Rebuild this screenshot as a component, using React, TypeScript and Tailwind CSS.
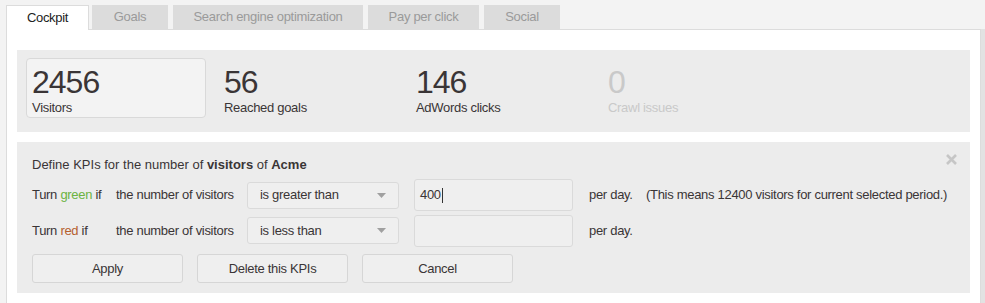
import React from "react";

const font = { fontFamily: '"Liberation Sans", Arial, sans-serif' };

function Stat({ value, label, active, muted }: { value: string; label: string; active?: boolean; muted?: boolean }) {
  return (
    <div
      className={
        "w-[180px] h-[60px] shrink-0 px-[5px] pt-[7px] rounded-[4px] border " +
        (active ? "bg-[#f3f3f3] border-[#d9d9d9]" : "border-transparent")
      }
    >
      <div className={"text-[32px] leading-[32px] tracking-[-1px] " + (muted ? "text-[#c9c9c9]" : "text-[#3a3536]")}>{value}</div>
      <div className={"mt-[2px] text-[13px] leading-[16px] " + (muted ? "text-[#c9c9c9]" : "text-[#3a3536]")}>{label}</div>
    </div>
  );
}

function Select({ text }: { text: string }) {
  return (
    <div className="w-[152px] h-[27px] shrink-0 border border-[#dadada] rounded-[3px] bg-[#efefef] flex items-center justify-between pl-[12px] pr-[12px] text-[13px] text-[#3a3536] whitespace-nowrap">
      <span>{text}</span>
      <svg width="9" height="5" viewBox="0 0 9 5">
        <path d="M0 0 L9 0 L4.5 5 Z" fill="#a0a0a0" />
      </svg>
    </div>
  );
}

function Input({ value }: { value?: string }) {
  return (
    <div className="w-[159px] h-[32px] shrink-0 border border-[#dadada] rounded-[3px] bg-[#efefef] flex items-center pl-[5px] text-[13px] text-[#3a3536]">
      {value && (
        <>
          <span>{value}</span>
          <span className="inline-block w-px h-[15px] bg-[#333] ml-[1px]" />
        </>
      )}
    </div>
  );
}

function Btn({ label }: { label: string }) {
  return (
    <div className="w-[151px] h-[29px] shrink-0 border border-[#d6d6d6] rounded-[3px] bg-[#efefef] flex items-center justify-center text-[13px] text-[#3a3536]">
      {label}
    </div>
  );
}

export default function App() {
  const tabs = ["Goals", "Search engine optimization", "Pay per click", "Social"];
  const widths = ["w-[76px]", "w-[190px]", "w-[111px]", "w-[76px]"];
  return (
    <div style={font} className="w-[985px] h-[303px] bg-[#f3f3f3] overflow-hidden pt-[5px] text-[#3a3536] tracking-[-0.3px]">
      <div className="flex items-start h-[24px] pl-[6px]">
        <div className="w-[83px] h-[25px] shrink-0 bg-white border border-b-0 border-[#dcdcdc] text-[13px] text-[#222] flex items-center justify-center relative z-10 pb-[1px]">
          Cockpit
        </div>
        <div className="flex gap-[5px] ml-[3px] h-[24px]">
          {tabs.map((t, i) => (
            <div key={t} className={widths[i] + " h-[24px] shrink-0 bg-[#dcdcdc] text-[13px] text-[#9a9a9a] flex items-center justify-center"}>
              {t}
            </div>
          ))}
        </div>
      </div>
      <div className="flex">
        <div className="ml-[6px] w-[975px] h-[280px] shrink-0 bg-white border border-b-0 border-[#dcdcdc] px-[10px] pt-[20px]">
          <div className="h-[82px] bg-[#ececec] px-[9px] pt-[8px] flex gap-[12px]">
            <Stat value="2456" label="Visitors" active />
            <Stat value="56" label="Reached goals" />
            <Stat value="146" label="AdWords clicks" />
            <Stat value="0" label="Crawl issues" muted />
          </div>
          <div className="mt-[10px] h-[151px] bg-[#ececec] px-[15px] pt-[14px] relative text-[13px] text-[#3a3536] whitespace-nowrap">
            <svg className="absolute right-[13px] top-[12px]" width="11" height="11" viewBox="0 0 11 11">
              <path d="M1 1 L10 10 M10 1 L1 10" stroke="#c6c6c6" strokeWidth="2.6" />
            </svg>
            <div className="leading-[18px] tracking-normal">
              Define KPIs for the number of <b>visitors</b> of <b>Acme</b>
            </div>
            <div className="mt-[5px] flex items-center h-[32px]">
              <div className="w-[84px] shrink-0">
                Turn <span className="text-[#6bb342]">green</span> if
              </div>
              <div className="w-[131px] shrink-0">the number of visitors</div>
              <Select text="is greater than" />
              <div className="ml-[15px] shrink-0"><Input value="400" /></div>
              <div className="ml-[16px] w-[57px] shrink-0">per day.</div>
              <div className="shrink-0">(This means 12400 visitors for current selected period.)</div>
            </div>
            <div className="mt-[4px] flex items-center h-[31px]">
              <div className="w-[84px] shrink-0">
                Turn <span className="text-[#b5602f]">red</span> if
              </div>
              <div className="w-[131px] shrink-0">the number of visitors</div>
              <Select text="is less than" />
              <div className="ml-[15px] shrink-0"><Input /></div>
              <div className="ml-[16px] shrink-0">per day.</div>
            </div>
            <div className="mt-[8px] flex gap-[14px]">
              <Btn label="Apply" />
              <Btn label="Delete this KPIs" />
              <Btn label="Cancel" />
            </div>
          </div>
        </div>
        <div className="w-[4px] h-[280px] bg-[#e2e2e2]" />
      </div>
    </div>
  );
}
